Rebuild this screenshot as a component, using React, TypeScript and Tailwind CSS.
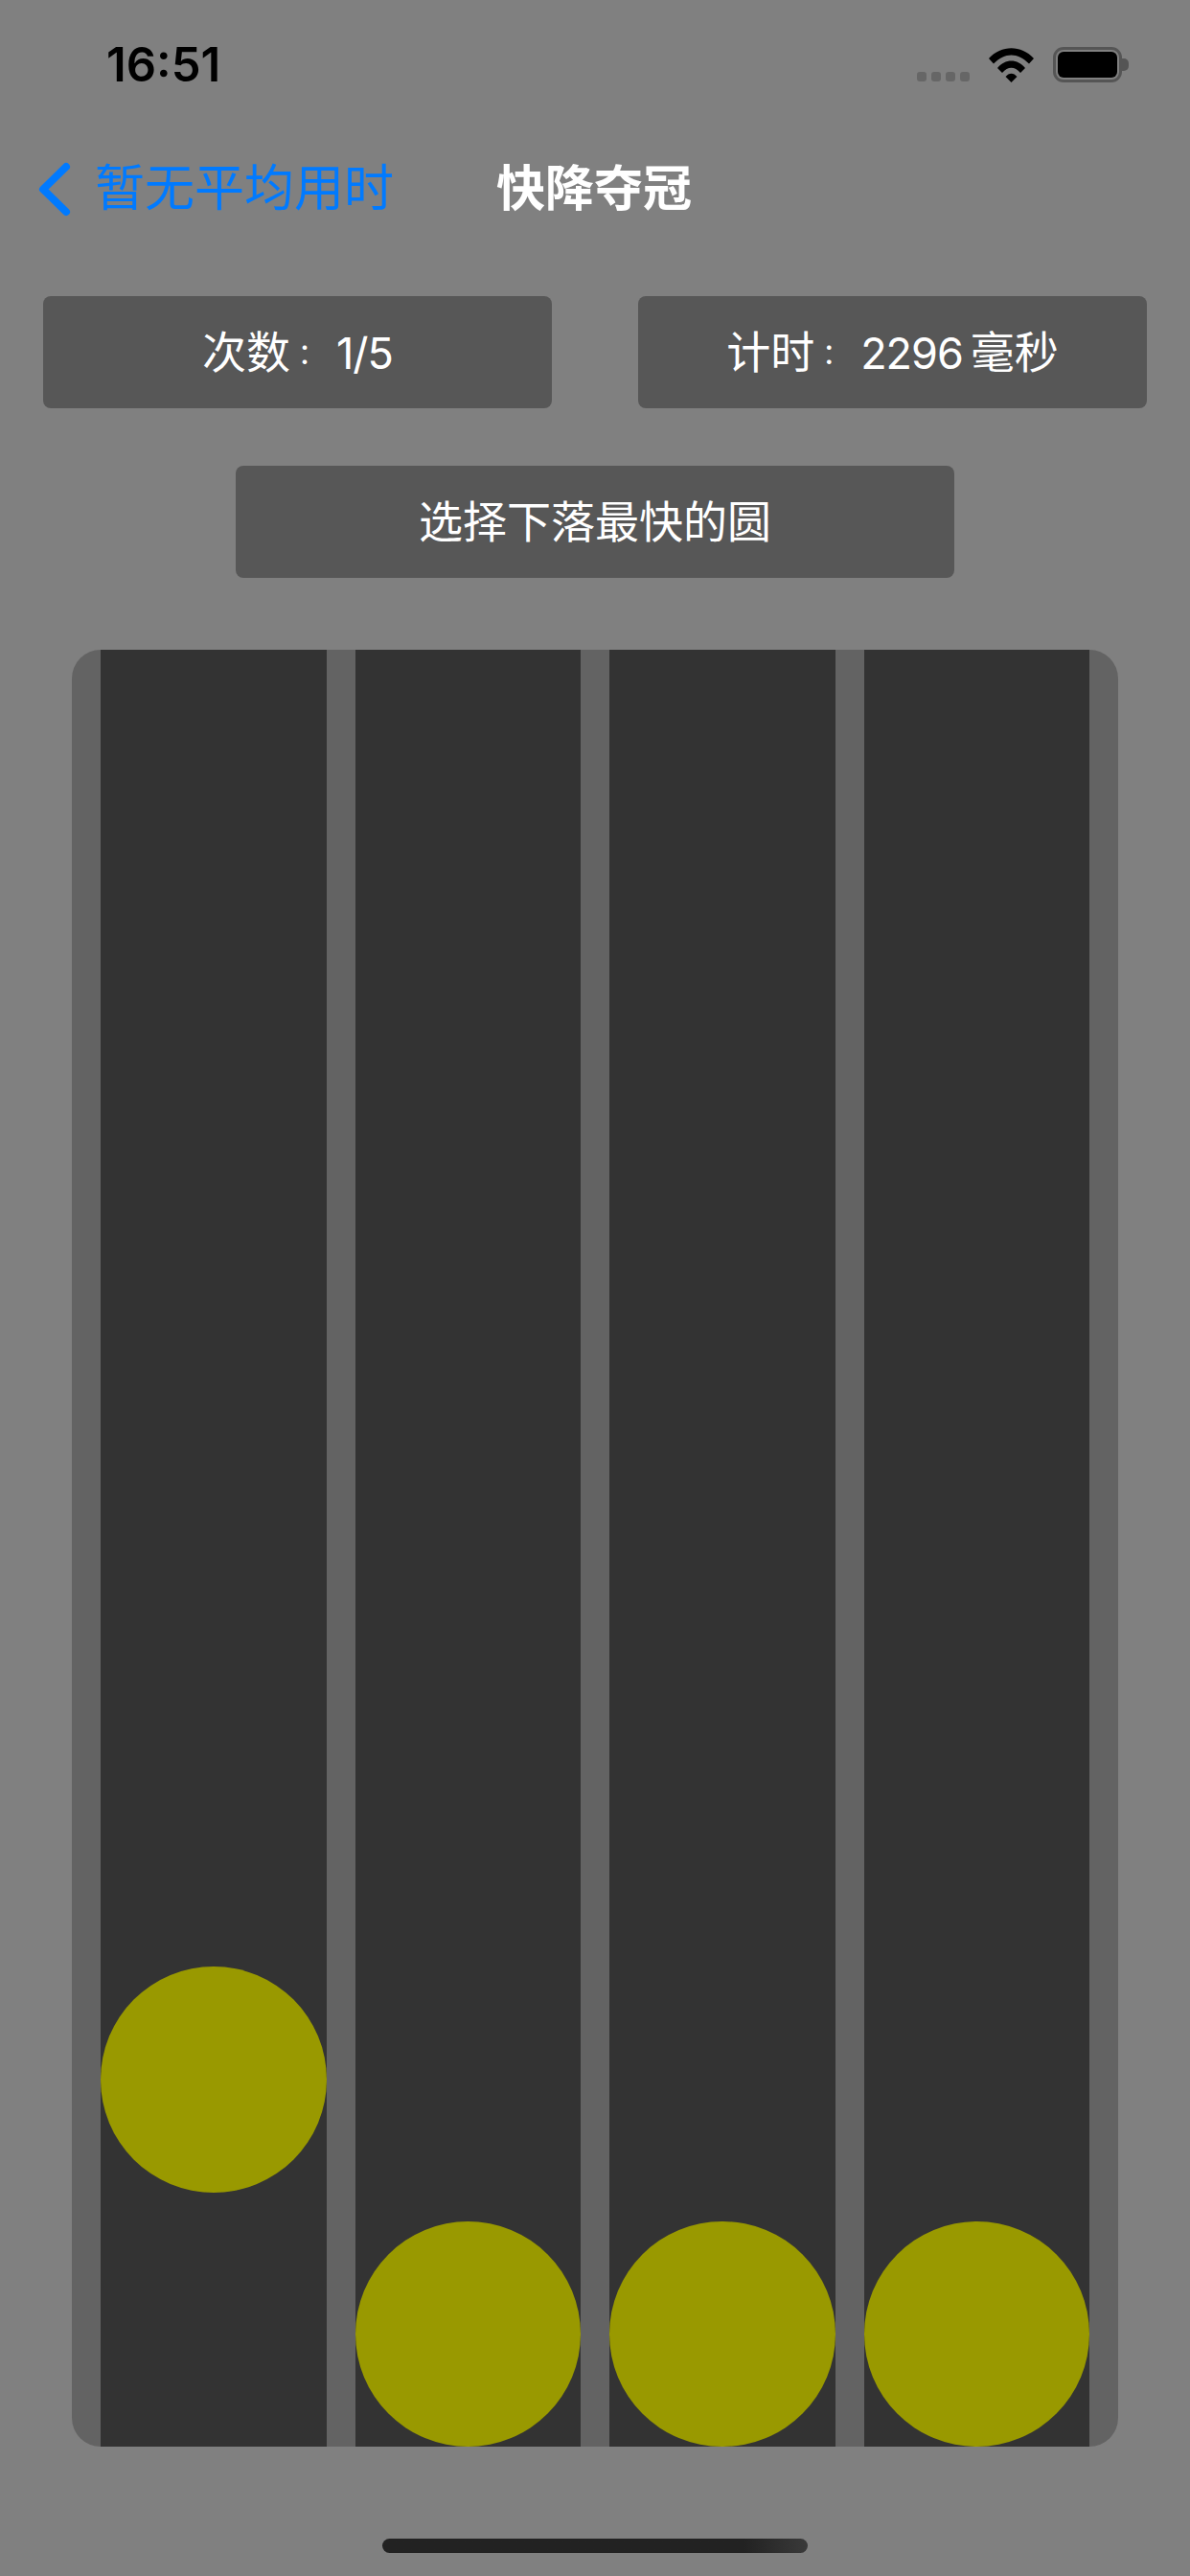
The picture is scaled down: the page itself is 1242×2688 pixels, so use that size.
import React from "react";

const cjk = "font-['Roboto','Noto_Sans_CJK_SC',sans-serif]";

function Column({ lift }: { lift?: boolean }) {
  return (
    <div className="flex flex-1 flex-col justify-end bg-[#333333]">
      <div
        className={`aspect-square w-full rounded-full bg-[#999900] ${lift ? "mb-[265.5px]" : ""}`}
      />
    </div>
  );
}

function InfoBox({ children, className }: { children: React.ReactNode; className: string }) {
  return (
    <div
      className={`flex h-[117px] items-center justify-center whitespace-pre rounded-[8px] bg-[#575757] pt-[2px] text-[46px] text-white ${cjk} ${className}`}
    >
      {children}
    </div>
  );
}

// small centred colon, the original has a wide gap after it
function Colon() {
  return <span className="mr-[18px] font-['Noto_Sans_CJK_TC',sans-serif] text-[30px]">：</span>;
}

function Num({ children }: { children: React.ReactNode }) {
  return (
    <span className="font-['Inter',sans-serif] text-[45px] font-normal tracking-[-1px]">
      {children}
    </span>
  );
}

export default function App() {
  return (
    <div className="flex h-[2688px] w-[1242px] flex-col overflow-hidden bg-[#808080]">
      {/* status bar */}
      <div className="flex h-[132px] items-start justify-between pl-[111px] pr-[64px] pt-[40px]">
        <span className="font-['Inter',sans-serif] text-[49px] font-semibold leading-[56px] text-black">
          16:51
        </span>
        <div className="flex items-end pt-[9px]">
          <div className="mb-[1px] mr-[20px] flex gap-[5px]">
            <div className="h-[10px] w-[10px] rounded-[3px] bg-[#666666]" />
            <div className="h-[10px] w-[10px] rounded-[3px] bg-[#666666]" />
            <div className="h-[10px] w-[10px] rounded-[3px] bg-[#666666]" />
            <div className="h-[10px] w-[10px] rounded-[3px] bg-[#666666]" />
          </div>
          <svg width="47" height="36" viewBox="0 0 47 36" className="mr-[20px]">
            <path d="M0 11 C13 -3.500 34 -3.500 47 11 L42 16.500 C30 4.500 17 4.500 5 16.500 Z" fill="#000" />
            <path d="M9 21 C17 11 30 11 38 21 L33 26 C27 19 20 19 14 26 Z" fill="#000" />
            <path d="M17.500 30 C21 25.500 26 25.500 29.500 30 L23.500 36 Z" fill="#000" />
          </svg>
          <div className="h-[37px] w-[72px] rounded-[11px] border-[3px] border-[#555555] p-[2px]">
            <div className="h-full w-full rounded-[6px] bg-black" />
          </div>
          <div className="mb-[12px] h-[13px] w-[7px] rounded-r-[5px] bg-[#555555]" />
        </div>
      </div>

      {/* nav bar */}
      <div className={`flex h-[132px] items-center pl-[38px] ${cjk}`}>
        <svg width="36" height="58" viewBox="0 0 36 58" className="mr-[25px]">
          <path d="M31 5 L7 28.500 L31 52" fill="none" stroke="#007aff" strokeWidth="8" strokeLinecap="round" strokeLinejoin="round" />
        </svg>
        <span className="text-[52px] leading-[60px] text-[#007aff]">暂无平均用时</span>
        <span className="ml-[107px] text-[51px] font-semibold leading-[60px] text-white">快降夺冠</span>
      </div>

      {/* info */}
      <div className="mt-[45px] flex justify-between px-[45px]">
        <InfoBox className="w-[531px]">
          次数<Colon />
          <Num>1/5</Num>
        </InfoBox>
        <InfoBox className="w-[531px]">
          计时<Colon />
          <Num>2296</Num>
          <span className="ml-[8px]">毫秒</span>
        </InfoBox>
      </div>
      <div className="mt-[60px] flex justify-center">
        <InfoBox className="w-[750px]">选择下落最快的圆</InfoBox>
      </div>

      {/* board */}
      <div className="mx-[75px] mt-[75px] flex h-[1875px] gap-[30px] rounded-[30px] bg-[#636363] px-[30px]">
        <Column lift />
        <Column />
        <Column />
        <Column />
      </div>

      {/* home indicator */}
      <div className="mt-[96px] flex justify-center">
        <div className="h-[15px] w-[444px] rounded-full bg-linear-to-r from-[#222222] from-85% to-[#3a3a3a]" />
      </div>
    </div>
  );
}
